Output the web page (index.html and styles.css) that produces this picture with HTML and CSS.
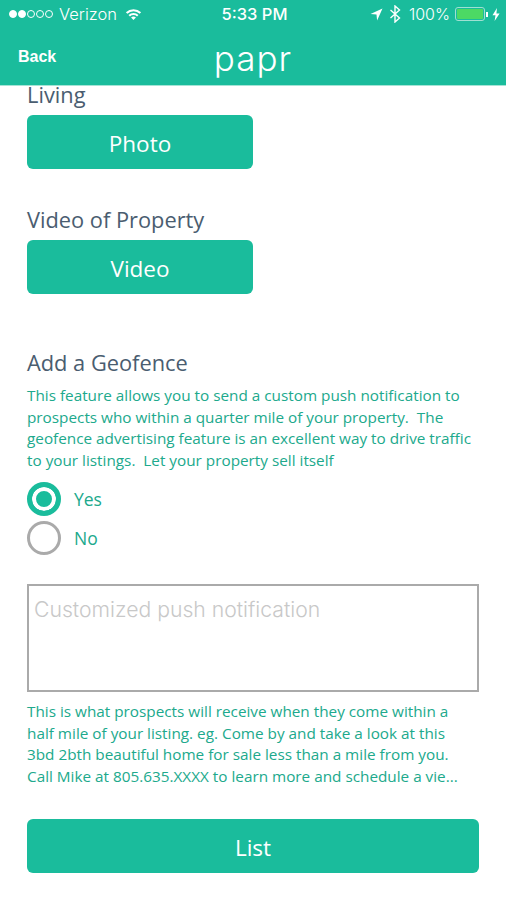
FILE: index.html
```html
<!DOCTYPE html>
<html lang="en">
<head>
    <meta charset="UTF-8">
    <title>papr</title>
    <link rel="stylesheet" href="styles.css">
</head>
<body>
    <header class="top">
        <div class="status">
            <div class="status-left">
                <span class="signal"><i class="on"></i><i class="on"></i><i></i><i></i><i></i></span>
                <span class="carrier">Verizon</span>
                <svg class="wifi" width="17" height="13" viewBox="0 0 18 14">
                    <path d="M0.8 4.6a11.8 11.8 0 0 1 16.4 0l-1.6 1.7a9.4 9.4 0 0 0-13.2 0z" fill="#fff"/>
                    <path d="M3.6 7.5a7.8 7.8 0 0 1 10.8 0l-1.6 1.7a5.4 5.4 0 0 0-7.6 0z" fill="#fff"/>
                    <path d="M6.4 10.3a3.8 3.8 0 0 1 5.2 0L9 13z" fill="#fff"/>
                </svg>
            </div>
            <div class="clock">5:33 PM</div>
            <div class="status-right">
                <svg width="13" height="13" viewBox="0 0 13 13"><path d="M12.5 0.5L0.5 6l6 .6.6 6z" fill="#fff"/></svg>
                <svg class="bt" width="12" height="18" viewBox="0 0 12 18"><path d="M1.5 5l9 8-4.5 4V1l4.5 4-9 8" fill="none" stroke="#fff" stroke-width="1.4"/></svg>
                <span class="pct">100%</span>
                <span class="battery"><span class="fill"></span></span>
                <span class="nub"></span>
                <svg width="8" height="13" viewBox="0 0 8 13"><path d="M5 0L0.5 7.3h3L2.6 13l5-7.6H4.4z" fill="#fff"/></svg>
            </div>
        </div>
        <nav class="nav">
            <a class="back">Back</a>
            <div class="logo">papr</div>
        </nav>
    </header>

    <main class="content">
        <h3 class="label">Living</h3>
        <button class="btn btn-half">Photo</button>

        <h3 class="label label-video">Video of Property</h3>
        <button class="btn btn-half">Video</button>

        <h3 class="label label-geo">Add a Geofence</h3>
        <p class="note">This feature allows you to send a custom push notification to<br>prospects who within a quarter mile of your property.&nbsp; The<br>geofence advertising feature is an excellent way to drive traffic<br>to your listings.&nbsp; Let your property sell itself</p>

        <div class="radios">
            <div class="radio-row"><span class="radio checked"></span><span>Yes</span></div>
            <div class="radio-row"><span class="radio"></span><span>No</span></div>
        </div>

        <div class="push-box">Customized push notification</div>

        <p class="note note-push">This is what prospects will receive when they come within a<br>half mile of your listing. eg. Come by and take a look at this<br>3bd 2bth beautiful home for sale less than a mile from you.<br>Call Mike at 805.635.XXXX to learn more and schedule a vie...</p>

        <button class="btn btn-full">List</button>
    </main>
</body>
</html>
```

FILE: styles.css
```css
body {
    font-family: "Open Sans", "Noto Sans", sans-serif;
    background: #fff;
    margin: 0;
    padding: 0;
    height: 900px;
    overflow: hidden;
}
.top {
    position: relative;
    z-index: 2;
    height: 85px;
    background: #1abc9c;
    color: #fff;
    border-bottom: 1px solid #a5e4d6;
}
.status {
    display: grid;
    grid-template-columns: 1fr auto 1fr;
    align-items: center;
    height: 28px;
    padding: 0 6px 0 9px;
}
.status-left, .status-right {
    display: flex;
    align-items: center;
}
.status-right {
    justify-content: flex-end;
}
.signal {
    display: flex;
    gap: 1px;
    margin-right: 6px;
}
.signal i {
    box-sizing: border-box;
    width: 8px;
    height: 8px;
    border: 1px solid #fff;
    border-radius: 50%;
}
.signal i.on {
    background: #fff;
}
.carrier, .pct {
    font-family: "Inter", sans-serif;
    font-size: 16.5px;
    font-weight: 300;
}
.wifi {
    margin-left: 8px;
}
.clock {
    font-family: "Inter", sans-serif;
    font-size: 16.5px;
    font-weight: 500;
}
.bt {
    margin-left: 6px;
}
.pct {
    margin-left: 8px;
    font-size: 16px;
}
.battery {
    box-sizing: border-box;
    display: block;
    width: 30px;
    height: 14px;
    margin-left: 5px;
    padding: 1px;
    border: 1px solid #9fe0d2;
    border-radius: 3px;
}
.fill {
    display: block;
    height: 100%;
    background: #4cd964;
    border-radius: 1px;
}
.nub {
    width: 2px;
    height: 5px;
    margin: 0 4px 0 1px;
    background: #fff;
}
.nav {
    display: grid;
    grid-template-columns: 1fr auto 1fr;
    align-items: center;
    height: 57px;
    padding: 0 18px;
}
.back {
    font-family: "Liberation Sans", Arial, sans-serif;
    font-size: 16px;
    font-weight: bold;
    margin-top: 1px;
}
.logo {
    font-family: "Inter", sans-serif;
    font-size: 35px;
    font-weight: 300;
    letter-spacing: 1px;
    line-height: 40px;
    margin-top: 3px;
}
.content {
    margin-top: -6px;
    padding: 0 27px;
}
.label {
    margin: 0 0 5px 0;
    color: #4a5d70;
    font-size: 21.8px;
    font-weight: 400;
    line-height: 30px;
}
.label-video {
    margin-top: 36px;
}
.label-geo {
    margin-top: 54px;
    margin-bottom: 7px;
}
.btn {
    display: block;
    height: 54px;
    padding: 3px 0 0 0;
    background: #1abc9c;
    color: #fff;
    border: none;
    border-radius: 6px;
    font-family: inherit;
    font-size: 22.5px;
    font-weight: 400;
}
.btn-half {
    width: 226px;
}
.btn-full {
    width: 452px;
    margin-top: 31px;
}
.note {
    margin: 0;
    color: #20a98c;
    font-size: 15.3px;
    line-height: 21.7px;
}
.radios {
    margin-top: 8px;
}
.radio-row {
    display: flex;
    align-items: center;
    gap: 13px;
    height: 39px;
    color: #20a98c;
    font-size: 17.5px;
}
.radio {
    box-sizing: border-box;
    width: 34px;
    height: 34px;
    border: 3px solid #aaa;
    border-radius: 50%;
}
.radio.checked {
    border: 5px solid #1abc9c;
    background: #1abc9c;
    box-shadow: inset 0 0 0 4px #fff;
}
.push-box {
    box-sizing: border-box;
    height: 108px;
    margin-top: 26px;
    padding: 10px 5px;
    border: 2px solid #aaa;
    color: #c8c8c8;
    font-family: "Inter", sans-serif;
    font-size: 21.2px;
    font-weight: 300;
}
.note-push {
    margin-top: 9px;
}
```
